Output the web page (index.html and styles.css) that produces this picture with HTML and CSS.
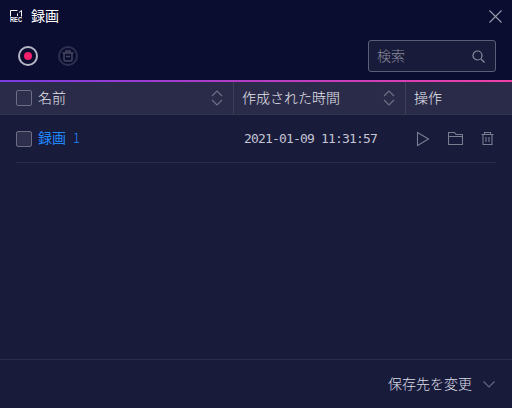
FILE: index.html
```html
<!DOCTYPE html>
<html lang="ja">
<head>
  <meta charset="UTF-8">
  <title>録画</title>
  <link rel="stylesheet" href="styles.css">
</head>
<body>

<div class="window">
  <div class="top">
    <div class="titlebar">
      <svg class="rec-icon" width="14" height="14" viewBox="0 0 14 14" fill="none" stroke="#fff">
        <path d="M1.500 7.500V1.500H8.500M10 3.500L12.500 1.500V7.500M8.500 7V4.500"/>
        <text x="1" y="12.500" class="rec-text" textLength="12" lengthAdjust="spacingAndGlyphs">REC</text>
      </svg>
      <span class="title">録画</span>
      <svg class="close" width="13" height="13" viewBox="0 0 13 13" fill="none" stroke="#9a9bab" stroke-width="1.100">
        <path d="M0.500 0.500L12.500 12.500M12.500 0.500L0.500 12.500"/>
      </svg>
    </div>
    <div class="toolbar">
      <div class="record"><span class="record-dot"></span></div>
      <div class="clear">
        <svg width="12" height="12" viewBox="0 0 12 12" fill="none" stroke="#45465f" stroke-width="1.500">
          <path d="M0.500 3H11.500M4 3V1H8V3M2 3V9.500Q2 11 3.500 11H8.500Q10 11 10 9.500V3M4 6.500H8"/>
        </svg>
      </div>
      <div class="search">
        <span class="search-text">検索</span>
        <svg width="13" height="13" viewBox="0 0 13 13" fill="none" stroke="#8c8d9e" stroke-width="1.200">
          <circle cx="5.500" cy="5.500" r="4.500"/>
          <path d="M9 9L12.500 12.500"/>
        </svg>
      </div>
    </div>
  </div>
  <div class="accent"></div>

  <div class="thead">
    <div class="th th-name">
      <span class="check"></span>
      <span class="th-label">名前</span>
      <svg class="sort" width="12" height="18" viewBox="0 0 12 18" fill="none" stroke="#6f7085" stroke-width="1.200">
        <path d="M1 7L6 2L11 7M1 11L6 16L11 11"/>
      </svg>
    </div>
    <div class="th th-time">
      <span class="th-label">作成された時間</span>
      <svg class="sort" width="12" height="18" viewBox="0 0 12 18" fill="none" stroke="#6f7085" stroke-width="1.200">
        <path d="M1 7L6 2L11 7M1 11L6 16L11 11"/>
      </svg>
    </div>
    <div class="th th-ops">
      <span class="th-label">操作</span>
    </div>
  </div>

  <div class="list">
    <div class="row">
      <div class="cell-name">
        <span class="check"></span>
        <span class="file-name">録画<span class="file-num">1</span></span>
      </div>
      <div class="cell-time">2021-01-09 11:31:57</div>
      <div class="cell-ops">
        <svg width="14" height="16" viewBox="0 0 14 16" fill="none" stroke="#7b7c90" stroke-width="1.100">
          <path d="M1.500 1.500V14.500L12.500 8Z"/>
        </svg>
        <svg width="15" height="13" viewBox="0 0 15 13" fill="none" stroke="#7b7c90" stroke-width="1.100">
          <path d="M0.500 12.500V0.500H6.500L8 2.500H14.500V12.500ZM0.500 4.500H14.500"/>
        </svg>
        <svg width="13" height="13" viewBox="0 0 13 13" fill="none" stroke="#7b7c90" stroke-width="1.100">
          <path d="M0.500 2.500H12.500M3.500 2.500V0.500H9.500V2.500M2 2.500V12.500H11V2.500M5 5V10M8 5V10"/>
        </svg>
      </div>
    </div>
  </div>

  <div class="footer">
    <span class="footer-text">保存先を変更</span>
    <svg width="12" height="7" viewBox="0 0 12 7" fill="none" stroke="#66677d" stroke-width="1.200">
      <path d="M0.500 0.500L6 6L11.500 0.500"/>
    </svg>
  </div>
</div>

</body>
</html>
```

FILE: styles.css
```css
* {
  box-sizing: border-box;
}
body {
  margin: 0;
  font-family: "Noto Sans CJK JP", sans-serif;
  font-size: 14px;
  background: #191b3b;
}
.window {
  width: 512px;
  height: 408px;
  display: flex;
  flex-direction: column;
  background: #191b3b;
  overflow: hidden;
}
.top {
  height: 80px;
  background: #0a0c30;
}
.titlebar {
  height: 32px;
  display: flex;
  align-items: center;
  padding: 0 10px 0 9px;
}
.rec-icon {
  overflow: visible;
}
.rec-text {
  font-family: "Liberation Sans", sans-serif;
  font-size: 6.500px;
  font-weight: bold;
  fill: #fff;
  stroke: none;
}
.title {
  margin-left: 8px;
  padding-bottom: 2px;
  color: #fff;
  line-height: 20px;
}
.close {
  margin-left: auto;
}
.toolbar {
  height: 48px;
  display: flex;
  align-items: center;
  padding: 0 16px 0 18px;
}
.record {
  width: 20px;
  height: 20px;
  border: 2px solid #b6b6c4;
  border-radius: 50%;
  display: flex;
  align-items: center;
  justify-content: center;
}
.record-dot {
  width: 8px;
  height: 8px;
  border-radius: 50%;
  background: #f0206a;
}
.clear {
  width: 20px;
  height: 20px;
  margin-left: 20px;
  border: 2px solid #2f3050;
  border-radius: 50%;
  display: flex;
  align-items: center;
  justify-content: center;
}
.search {
  width: 128px;
  height: 32px;
  margin-left: auto;
  padding: 0 10px 0 8px;
  display: flex;
  align-items: center;
  justify-content: space-between;
  background: #191b3b;
  border: 1px solid #5d5e76;
  border-radius: 3px;
}
.search-text {
  padding-bottom: 2px;
  color: #8a8b9d;
  font-weight: 300;
}
.accent {
  height: 2px;
  background: linear-gradient(90deg, #7a3be0, #f040a8);
}
.thead {
  height: 33px;
  display: flex;
  background: #2a2b48;
  border-bottom: 1px solid #33344f;
  color: #e6e6ee;
}
.th {
  display: flex;
  align-items: center;
  border-right: 1px solid #3d3e5a;
}
.th-label {
  padding-bottom: 2px;
  font-weight: 300;
}
.th-name {
  width: 234px;
  padding: 0 10px 0 16px;
}
.th-time {
  width: 172px;
  padding: 0 10px 0 8px;
}
.th-ops {
  flex: 1;
  padding: 0 8px;
  border-right: none;
}
.sort {
  margin-left: auto;
}
.check {
  width: 16px;
  height: 16px;
  flex: none;
  margin-right: 6px;
  background: #2e2f4c;
  border: 1px solid #6d6e84;
  border-radius: 2px;
}
.list {
  flex: 1;
  padding: 0 16px;
}
.row {
  height: 48px;
  display: flex;
  align-items: center;
  border-bottom: 1px solid #2c2d49;
}
.cell-name {
  width: 228px;
  display: flex;
  align-items: center;
}
.file-name {
  padding-bottom: 3px;
  color: #1e88ff;
}
.file-num {
  margin-left: 7px;
  font-size: 13px;
  font-weight: 300;
}
.cell-time {
  width: 134px;
  color: #c4c5d4;
  font-family: "DejaVu Sans Mono", monospace;
  font-size: 13px;
  letter-spacing: -0.830px;
}
.cell-ops {
  flex: 1;
  display: flex;
  align-items: center;
  padding-left: 38px;
  gap: 18px;
}
.footer {
  height: 49px;
  display: flex;
  align-items: center;
  justify-content: flex-end;
  padding: 0 17px 0 0;
  border-top: 1px solid #2c2d49;
}
.footer-text {
  padding-bottom: 3px;
  margin-right: 11px;
  color: #dcdde6;
  font-weight: 300;
}
```
